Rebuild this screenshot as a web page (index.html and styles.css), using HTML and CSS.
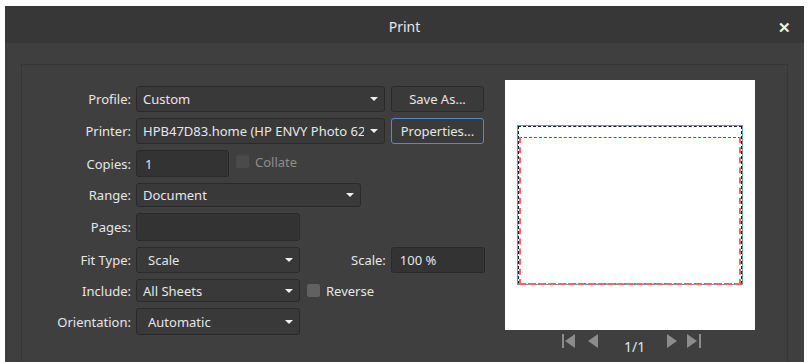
FILE: index.html
```html
<!DOCTYPE html>
<html lang="en">
<head>
    <meta charset="UTF-8">
    <title>Print</title>
    <link rel="stylesheet" href="styles.css">
</head>
<body>
    <div class="dialogo">
        <!-- Barra de titulo -->
        <div class="titulo">
            <span>Print</span>
            <span class="cerrar">✕</span>
        </div>

        <div class="cuerpo">
            <div class="panel">
                <!-- Formulario de impresion -->
                <div class="formulario">
                    <div class="fila">
                        <label>Profile:</label>
                        <div class="combo ancho-grande"><span class="valor">Custom</span><span class="flecha"></span></div>
                        <div class="boton">Save As...</div>
                    </div>
                    <div class="fila">
                        <label>Printer:</label>
                        <div class="combo ancho-grande"><span class="valor">HPB47D83.home (HP ENVY Photo 6200 series)</span><span class="flecha"></span></div>
                        <div class="boton activo">Properties...</div>
                    </div>
                    <div class="fila alto-27">
                        <label>Copies:</label>
                        <div class="campo ancho-copias">1</div>
                        <span class="casilla apagada"></span>
                        <span class="texto-apagado">Collate</span>
                    </div>
                    <div class="fila alto-24">
                        <label>Range:</label>
                        <div class="combo ancho-rango"><span class="valor">Document</span><span class="flecha"></span></div>
                    </div>
                    <div class="fila alto-28">
                        <label>Pages:</label>
                        <div class="campo ancho-medio"></div>
                    </div>
                    <div class="fila">
                        <label>Fit Type:</label>
                        <div class="combo ancho-medio sangria"><span class="valor">Scale</span><span class="flecha"></span></div>
                        <label class="etiqueta-escala">Scale:</label>
                        <div class="campo ancho-escala">100 %</div>
                    </div>
                    <div class="fila alto-23">
                        <label>Include:</label>
                        <div class="combo ancho-medio"><span class="valor">All Sheets</span><span class="flecha"></span></div>
                        <span class="casilla"></span>
                        <span>Reverse</span>
                    </div>
                    <div class="fila alto-27">
                        <label>Orientation:</label>
                        <div class="combo ancho-medio sangria"><span class="valor">Automatic</span><span class="flecha"></span></div>
                    </div>
                </div>

                <!-- Vista previa -->
                <div class="vista">
                    <div class="hoja">
                        <div class="area">
                            <div class="linea">
                                <div class="margen"></div>
                            </div>
                        </div>
                    </div>
                    <div class="navegacion">
                        <svg class="primera" width="14" height="14" viewBox="0 0 14 14"><rect x="0" y="0" width="2" height="14" fill="#8c8c8c"/><polygon points="13,0 13,14 3,7" fill="#8c8c8c"/></svg>
                        <svg class="anterior" width="10" height="14" viewBox="0 0 10 14"><polygon points="10,0 10,14 0,7" fill="#8c8c8c"/></svg>
                        <span class="pagina">1/1</span>
                        <svg class="siguiente" width="10" height="14" viewBox="0 0 10 14"><polygon points="0,0 0,14 10,7" fill="#8c8c8c"/></svg>
                        <svg class="ultima" width="14" height="14" viewBox="0 0 14 14"><polygon points="0,0 0,14 10,7" fill="#8c8c8c"/><rect x="12" y="0" width="2" height="14" fill="#8c8c8c"/></svg>
                    </div>
                </div>
            </div>
        </div>
    </div>
</body>
</html>
```

FILE: styles.css
```css
/* Fondo blanco alrededor del dialogo */
body {
    margin: 6px 6px 0 5px;
    background-color: #fff;
    font-family: "Noto Sans", "Open Sans", sans-serif;
    font-size: 13px;
    color: #e6e6e6;
    overflow: hidden;
    height: 356px;
}

.dialogo {
    width: 799px;
    height: 356px;
    background-color: #3f3f3f;
    overflow: hidden;
}

/* Barra de titulo */
.titulo {
    height: 37px;
    box-sizing: border-box;
    padding-top: 4px;
    background-color: #373737;
    display: flex;
    align-items: center;
    justify-content: center;
    position: relative;
    font-size: 14px;
    color: #e8e8e8;
}

.cerrar {
    position: absolute;
    right: 13px;
    top: 11px;
    font-size: 15px;
    font-weight: bold;
    color: #f0f0f0;
}

.cuerpo {
    padding: 21px 0 0 16px;
}

/* Panel interior con borde */
.panel {
    width: 765px;
    height: 320px;
    border: 1px solid #363636;
    display: flex;
    padding-top: 15px;
}

.formulario {
    width: 464px;
    margin-top: 6px;
    display: flex;
    flex-direction: column;
    gap: 6px;
}

.fila {
    display: flex;
    align-items: center;
    height: 26px;
}

.alto-23 { height: 23px; }
.alto-24 { height: 24px; }
.alto-27 { height: 27px; }
.alto-28 { height: 28px; }

.fila label {
    width: 109px;
    text-align: right;
    margin-right: 5px;
    flex-shrink: 0;
}

/* Desplegables */
.combo {
    height: 100%;
    box-sizing: border-box;
    background-color: #393939;
    border: 1px solid #2a2a2a;
    border-radius: 3px;
    padding-left: 6px;
    display: flex;
    align-items: center;
    white-space: nowrap;
}

.sangria {
    padding-left: 11px;
}

.valor {
    flex: 1;
    overflow: hidden;
}

.flecha {
    width: 20px;
    height: 100%;
    flex-shrink: 0;
    display: flex;
    align-items: center;
    justify-content: center;
}

.flecha::after {
    content: "";
    border-left: 4px solid transparent;
    border-right: 4px solid transparent;
    border-top: 4px solid #f0f0f0;
}

.ancho-grande { width: 249px; }
.ancho-rango { width: 225px; }
.ancho-medio { width: 164px; }
.ancho-copias { width: 93px; }
.ancho-escala { width: 94px; }

/* Campos de texto */
.campo {
    height: 100%;
    box-sizing: border-box;
    background-color: #333;
    border: 1px solid #2a2a2a;
    border-radius: 3px;
    padding: 0 8px;
    display: flex;
    align-items: center;
}

/* Botones */
.boton {
    width: 93px;
    height: 100%;
    box-sizing: border-box;
    margin-left: 6px;
    background-color: #3a3a3a;
    border: 1px solid #2a2a2a;
    border-radius: 3px;
    display: flex;
    align-items: center;
    justify-content: center;
}

.boton.activo {
    border-color: #5b88c4;
}

.etiqueta-escala {
    width: auto !important;
    margin-left: 51px;
}

/* Casillas de verificacion */
.casilla {
    width: 13px;
    height: 13px;
    background-color: #616161;
    border-radius: 2px;
    margin: 0 6px 0 7px;
}

.casilla.apagada {
    background-color: #4a4a4a;
    margin-top: -4px;
}

.texto-apagado {
    color: #8d8d8d;
    margin-top: -4px;
}

/* Vista previa de la hoja */
.vista {
    margin-left: 19px;
    width: 250px;
}

.hoja {
    width: 250px;
    height: 250px;
    background-color: #fff;
    padding: 45px 12px 0;
    box-sizing: border-box;
}

.area {
    height: 160px;
    border: 1px solid #5aa3a5;
    box-sizing: border-box;
}

.linea {
    height: 158px;
    border: 1px dashed #1c1c1c;
    border-bottom-color: #3f8f90;
    box-sizing: border-box;
}

.margen {
    height: 145px;
    margin: 10px 0 0;
    border: 2px dashed #ff6262;
    border-top: 1px dashed #e52020;
}

.navegacion {
    display: flex;
    align-items: flex-start;
    margin-top: 4px;
    padding-left: 57px;
}

.anterior { margin-left: 12px; }
.siguiente { margin-left: 22px; }
.ultima { margin-left: 10px; }

.pagina {
    margin-left: 26px;
    margin-top: 3px;
    color: #dfe6f0;
    font-size: 14px;
}
```
